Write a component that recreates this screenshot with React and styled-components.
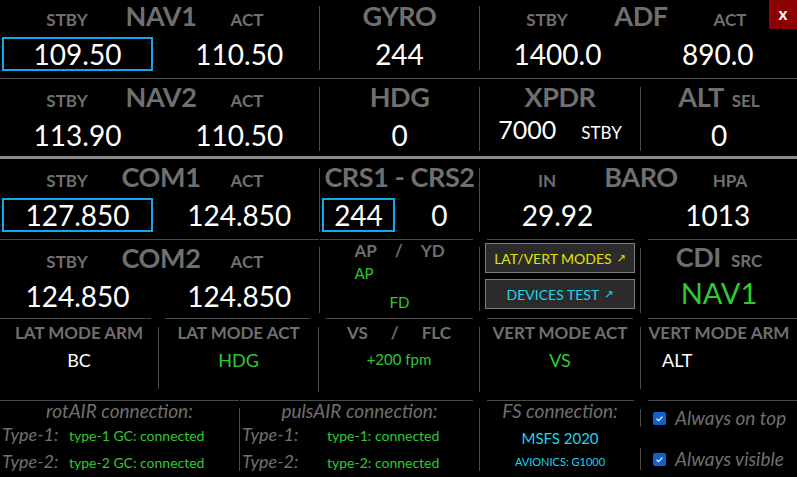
import styled, { createGlobalStyle } from "styled-components";

const GREY = "#6f6f6f";
const LINE = "#4a4a4a";
const GREEN = "#30c930";
const CYAN = "#1cd6ee";
const BLUE = "#12a9ec";
const YELLOW = "#e2e205";

const GlobalStyle = createGlobalStyle`
  * { box-sizing: border-box; }
  html, body { margin: 0; padding: 0; background: #000; }
  body { font-family: Lato, "Open Sans", "DejaVu Sans", sans-serif; }
`;

const Panel = styled.div`
  position: relative;
  width: 797px;
  height: 477px;
  display: flex;
  flex-direction: column;
  background: #000;
  overflow: hidden;
`;

const Row = styled.div`
  display: flex;
  flex: 0 0 ${(p) => p.$h}px;
  border-bottom: ${(p) => (p.$line ? `1px solid ${LINE}` : "none")};
`;

const ThickRule = styled.div`
  flex: 0 0 3px;
  background: #8c8c8c;
`;

const Cell = styled.div`
  position: relative;
  flex: 0 0 ${(p) => p.$w}px;
  width: ${(p) => p.$w}px;
  min-width: 0;
  display: flex;
  flex-direction: column;
  align-items: ${(p) => p.$align || "stretch"};
  padding-top: ${(p) => p.$pt || 0}px;

  &::before {
    content: "";
    display: ${(p) => (p.$rule ? "block" : "none")};
    position: absolute;
    top: 0;
    left: ${(p) => (p.$rule ? p.$rule[0] : 0)}px;
    right: ${(p) => (p.$rule ? p.$rule[1] : 0)}px;
    height: 1px;
    background: ${LINE};
  }
`;

const VSep = styled.div`
  flex: 0 0 1px;
  background: ${LINE};
  margin: ${(p) => p.$t}px 0 ${(p) => p.$b}px;
`;

const Head = styled.div`
  display: flex;
  align-items: baseline;
  justify-content: center;
  gap: ${(p) => p.$gap || 0}px;
  height: 30px;
  line-height: 30px;
  white-space: nowrap;
`;

const Slot = styled.div`
  flex: 0 0 ${(p) => p.$w}px;
  min-width: 0;
  display: flex;
  justify-content: center;
  padding-right: ${(p) => p.$pr || 0}px;
`;

const Title = styled.span`
  font-size: 27px;
  font-weight: 700;
  color: ${GREY};
  letter-spacing: -0.4px;
`;

const Label = styled.span`
  font-size: 17px;
  font-weight: 700;
  color: ${GREY};
`;

const Values = styled.div`
  display: grid;
  grid-template-columns: ${(p) => (p.$single ? "1fr" : "1fr 1fr")};
  margin-top: 6px;
  height: 34px;
`;

const ValueBox = styled.div`
  display: flex;
  align-items: center;
  justify-content: center;
  width: ${(p) => (p.$w ? `${p.$w}px` : "auto")};
  margin-left: ${(p) => p.$ml || 0}px;
  border: 2px solid ${(p) => (p.$active ? BLUE : "transparent")};
  font-size: 28px;
  line-height: 30px;
  color: #fff;
`;

const XpdrLine = styled.div`
  display: flex;
  align-items: baseline;
  justify-content: center;
  gap: 25px;
  margin-top: 2px;
  line-height: 30px;
  color: #fff;
`;

const XpdrCode = styled.span`
  font-size: 25px;
`;

const XpdrMode = styled.span`
  font-size: 17px;
`;

const CdiValue = styled.div`
  margin-top: 6px;
  text-align: center;
  font-size: 29px;
  line-height: 30px;
  color: ${GREEN};
`;

const PairGrid = styled.div`
  display: grid;
  grid-template-columns: repeat(3, auto);
  column-gap: ${(p) => p.$gap}px;
  justify-content: center;
  align-items: baseline;
  padding-top: ${(p) => p.$pt}px;
`;

const PairLabel = styled.span`
  font-size: 17px;
  line-height: 20px;
  font-weight: 700;
  color: ${GREY};
`;

const Status = styled.span`
  grid-column: ${(p) => p.$col || "auto"};
  justify-self: ${(p) => p.$justify || "start"};
  margin-top: ${(p) => p.$mt || 0}px;
  font-size: 15px;
  line-height: 18px;
  color: ${GREEN};
  white-space: nowrap;
`;

const ButtonStack = styled.div`
  display: flex;
  flex-direction: column;
  align-items: center;
  gap: 6px;
`;

const ModeButton = styled.button`
  width: 150px;
  height: 30px;
  padding: 0;
  display: flex;
  align-items: center;
  justify-content: center;
  gap: 5px;
  background: #2b2b2b;
  border: 1px solid #7c7c7c;
  color: ${(p) => p.$color};
  font-family: inherit;
  font-size: 14px;
`;

const Arrow = styled.span`
  font-family: "DejaVu Sans", sans-serif;
  font-size: 11px;
`;

const ModeLabel = styled.div`
  text-align: center;
  font-size: 17px;
  line-height: 20px;
  font-weight: 700;
  color: ${GREY};
  white-space: nowrap;
`;

const ModeValue = styled.div`
  margin-top: 6px;
  padding-left: ${(p) => p.$pl || 0}px;
  text-align: ${(p) => (p.$pl ? "left" : "center")};
  font-size: 18px;
  line-height: 22px;
  color: ${(p) => p.$color || "#fff"};
`;

const Caption = styled.div`
  text-align: center;
  font-size: 19px;
  line-height: 20px;
  font-style: italic;
  color: ${GREY};
  white-space: nowrap;
`;

const ConnGrid = styled.div`
  display: grid;
  grid-template-columns: ${(p) => p.$label}px auto;
  row-gap: 5px;
  align-items: baseline;
  margin-top: 2px;
  padding-left: 2px;
`;

const ConnType = styled.span`
  font-size: 18px;
  line-height: 22px;
  font-style: italic;
  color: ${GREY};
`;

const ConnState = styled.span`
  font-size: 14px;
  color: ${GREEN};
  white-space: nowrap;
`;

const SimName = styled.div`
  margin-top: ${(p) => p.$mt}px;
  text-align: center;
  font-size: ${(p) => p.$size}px;
  line-height: ${(p) => p.$size + 3}px;
  color: ${CYAN};
`;

const CheckRow = styled.div`
  display: flex;
  align-items: center;
  gap: 9px;
  height: ${(p) => p.$h}px;
  margin-top: ${(p) => p.$mt || 0}px;
  padding-left: 12px;
  border-left: 1px solid ${LINE};
  line-height: ${(p) => p.$h}px;
`;

const CheckText = styled.span`
  font-size: 19px;
  font-style: italic;
  color: ${GREY};
  white-space: nowrap;
`;

const CloseButton = styled.button`
  position: absolute;
  top: 0;
  right: 0;
  width: 28px;
  height: 29px;
  padding: 0 0 3px;
  border: none;
  background: #8b0000;
  color: #fff;
  font-family: inherit;
  font-size: 17px;
  font-weight: 700;
`;

function CheckBox() {
  return (
    <svg width="13" height="13" viewBox="0 0 13 13">
      <rect width="13" height="13" rx="2" fill="#0d63c7" />
      <polyline points="3.6,6.8 5.6,8.7 9.4,4.6" fill="none" stroke="#fff" strokeWidth="1.2" />
    </svg>
  );
}

function Freq({ w, pt, rule, title, left = "STBY", right = "ACT", pr = 13, stby, act, boxed }) {
  return (
    <Cell $w={w} $pt={pt} $rule={rule}>
      <Head>
        <Slot $w={134}>
          <Label>{left}</Label>
        </Slot>
        <Slot $w={54}>
          <Title>{title}</Title>
        </Slot>
        <Slot $w={w - 188} $pr={pr}>
          <Label>{right}</Label>
        </Slot>
      </Head>
      <Values>
        <ValueBox $active={boxed} $ml={2} $w={151}>
          {stby}
        </ValueBox>
        <ValueBox>{act}</ValueBox>
      </Values>
    </Cell>
  );
}

function Single({ w, pt, title, value }) {
  return (
    <Cell $w={w} $pt={pt}>
      <Head>
        <Title>{title}</Title>
      </Head>
      <Values $single>
        <ValueBox>{value}</ValueBox>
      </Values>
    </Cell>
  );
}

function Mode({ w, rule, label, value, color, pl }) {
  return (
    <Cell $w={w} $pt={5} $rule={rule}>
      <ModeLabel>{label}</ModeLabel>
      <ModeValue $color={color} $pl={pl}>
        {value}
      </ModeValue>
    </Cell>
  );
}

function Connection({ w, rule, name, labelWidth, type1, type2 }) {
  return (
    <Cell $w={w} $pt={1} $rule={rule}>
      <Caption>{name} connection:</Caption>
      <ConnGrid $label={labelWidth}>
        <ConnType>Type-1:</ConnType>
        <ConnState>{type1}</ConnState>
        <ConnType>Type-2:</ConnType>
        <ConnState>{type2}</ConnState>
      </ConnGrid>
    </Cell>
  );
}

export default function App() {
  return (
    <>
      <GlobalStyle />
      <Panel>
        <Row $h={79} $line>
          <Freq w={319} pt={1} title="NAV1" stby="109.50" act="110.50" boxed />
          <VSep $t={6} $b={8} />
          <Single w={159} pt={1} title="GYRO" value="244" />
          <VSep $t={6} $b={8} />
          <Freq w={317} pt={1} title="ADF" pr={5} stby="1400.0" act="890.0" />
        </Row>

        <Row $h={77}>
          <Freq w={319} pt={3} title="NAV2" stby="113.90" act="110.50" />
          <VSep $t={8} $b={5} />
          <Single w={159} pt={3} title="HDG" value="0" />
          <VSep $t={8} $b={5} />
          <Cell $w={160} $pt={3}>
            <Head>
              <Title>XPDR</Title>
            </Head>
            <XpdrLine>
              <XpdrCode>7000</XpdrCode>
              <XpdrMode>STBY</XpdrMode>
            </XpdrLine>
          </Cell>
          <VSep $t={8} $b={5} />
          <Cell $w={156} $pt={3}>
            <Head $gap={8}>
              <Title>ALT</Title>
              <Label>SEL</Label>
            </Head>
            <Values $single>
              <ValueBox>0</ValueBox>
            </Values>
          </Cell>
        </Row>

        <ThickRule />

        <Row $h={80}>
          <Freq w={319} pt={3} title="COM1" stby="127.850" act="124.850" boxed />
          <VSep $t={9} $b={7} />
          <Cell $w={159} $pt={3}>
            <Head>
              <Title>CRS1 - CRS2</Title>
            </Head>
            <Values>
              <ValueBox $active $ml={2} $w={73}>
                244
              </ValueBox>
              <ValueBox>0</ValueBox>
            </Values>
          </Cell>
          <VSep $t={9} $b={7} />
          <Freq w={317} pt={3} title="BARO" left="IN" right="HPA" pr={5} stby="29.92" act="1013" />
        </Row>

        <Row $h={79}>
          <Freq w={319} pt={4} rule={[0, 0]} title="COM2" stby="124.850" act="124.850" />
          <VSep $t={8} $b={5} />
          <Cell $w={159} $rule={[0, 6]}>
            <PairGrid $gap={18} $pt={2}>
              <PairLabel>AP</PairLabel>
              <PairLabel>/</PairLabel>
              <PairLabel>YD</PairLabel>
              <Status $mt={3}>AP</Status>
              <Status $col="1 / -1" $justify="center" $mt={11}>
                FD
              </Status>
            </PairGrid>
          </Cell>
          <VSep $t={8} $b={7} />
          <Cell $w={160} $pt={4} $rule={[7, 6]}>
            <ButtonStack>
              <ModeButton $color={YELLOW}>
                LAT/VERT MODES <Arrow>↗</Arrow>
              </ModeButton>
              <ModeButton $color={CYAN}>
                DEVICES TEST <Arrow>↗</Arrow>
              </ModeButton>
            </ButtonStack>
          </Cell>
          <VSep $t={9} $b={5} />
          <Cell $w={156} $pt={3} $rule={[7, 0]}>
            <Head $gap={10}>
              <Title>CDI</Title>
              <Label>SRC</Label>
            </Head>
            <CdiValue>NAV1</CdiValue>
          </Cell>
        </Row>

        <Row $h={82}>
          <Mode w={158} rule={[0, 7]} label="LAT MODE ARM" value="BC" />
          <VSep $t={9} $b={11} />
          <Mode w={159} rule={[6, 8]} label="LAT MODE ACT" value="HDG" color={GREEN} />
          <VSep $t={9} $b={8} />
          <Cell $w={160} $rule={[7, 6]}>
            <PairGrid $gap={23} $pt={5}>
              <PairLabel>VS</PairLabel>
              <PairLabel>/</PairLabel>
              <PairLabel>FLC</PairLabel>
              <Status $col="1 / -1" $justify="center" $mt={7}>
                +200 fpm
              </Status>
            </PairGrid>
          </Cell>
          <VSep $t={9} $b={8} />
          <Mode w={160} rule={[7, 7]} label="VERT MODE ACT" value="VS" color={GREEN} />
          <VSep $t={9} $b={11} />
          <Mode w={156} rule={[7, 0]} label="VERT MODE ARM" value="ALT" pl={21} />
        </Row>

        <Row $h={77}>
          <Connection
            w={239}
            rule={[0, 0]}
            name="rotAIR"
            labelWidth={67}
            type1="type-1 GC: connected"
            type2="type-2 GC: connected"
          />
          <VSep $t={8} $b={6} />
          <Connection
            w={239}
            rule={[0, 6]}
            name="pulsAIR"
            labelWidth={85}
            type1="type-1: connected"
            type2="type-2: connected"
          />
          <VSep $t={8} $b={6} />
          <Cell $w={160} $pt={1} $rule={[7, 6]}>
            <Caption>FS connection:</Caption>
            <SimName $mt={8} $size={15}>
              MSFS 2020
            </SimName>
            <SimName $mt={8} $size={11}>
              AVIONICS: G1000
            </SimName>
          </Cell>
          <Cell $w={157} $pt={9} $rule={[8, 0]}>
            <CheckRow $h={18}>
              <CheckBox />
              <CheckText>Always on top</CheckText>
            </CheckRow>
            <CheckRow $h={22} $mt={21}>
              <CheckBox />
              <CheckText>Always visible</CheckText>
            </CheckRow>
          </Cell>
        </Row>

        <CloseButton>x</CloseButton>
      </Panel>
    </>
  );
}
